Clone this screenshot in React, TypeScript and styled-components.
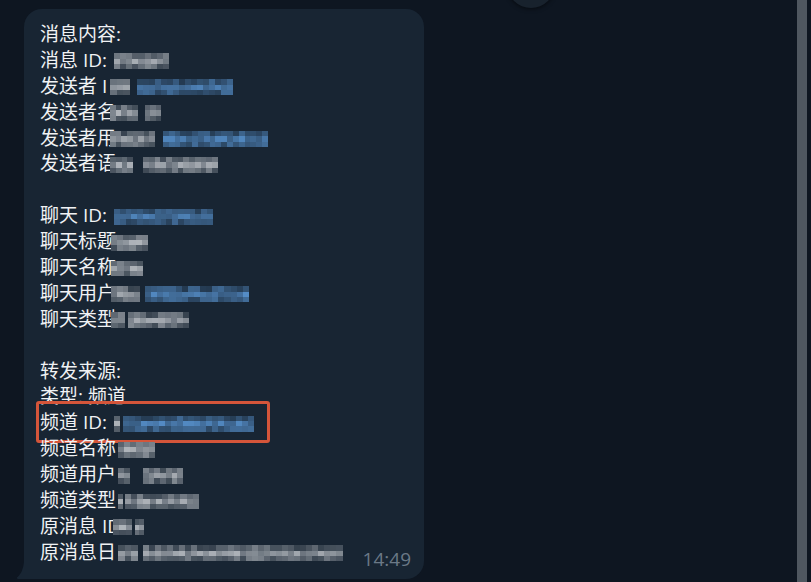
import React from "react";
import styled, { createGlobalStyle } from "styled-components";

const Global = createGlobalStyle`
  html, body { margin: 0; padding: 0; background: #0e1621; }
  body { width: 811px; height: 582px; overflow: hidden; }
`;

const Page = styled.div`
  width: 811px;
  height: 582px;
  display: flex;
  background: #0e1621;
  overflow: hidden;
  font-family: "Open Sans", "Noto Sans CJK SC", sans-serif;
`;

const Chat = styled.div`
  flex: 1;
  position: relative;
  padding: 9px 0 0 24px;
`;

const ScrollTrack = styled.div`
  width: 10px;
  margin-right: 4px;
  background: #4f5760;
`;

const JumpButton = styled.div`
  position: absolute;
  left: 507px;
  top: -40px;
  width: 48px;
  height: 48px;
  border-radius: 50%;
  background: #18222d;
  box-shadow: 0 1px 4px rgba(0, 0, 0, 0.55);
`;

const Bubble = styled.div`
  position: relative;
  width: 400px;
  box-sizing: border-box;
  padding: 13px 13px 13px 16px;
  background: #182533;
  border-radius: 18px 18px 18px 0;
  color: #f0f2f4;
  font-size: 19px;
`;

const Tail = styled.svg`
  position: absolute;
  left: -9px;
  bottom: 0;
  width: 9px;
  height: 17px;
  fill: #182533;
`;

const Line = styled.div`
  position: relative;
  display: grid;
  height: 25.9px;
  line-height: 25.9px;
  white-space: pre;
`;

const Label = styled.span`
  grid-area: 1 / 1;
`;

const Redact = styled.span<{ $x: number }>`
  grid-area: 1 / 1;
  align-self: center;
  justify-self: start;
  margin-left: ${(p) => p.$x}px;
  margin-top: 1px;
  display: flex;
`;

const MosaicBlock = styled.span<{ $cols: number; $w: number }>`
  display: grid;
  grid-template-rows: repeat(3, 5.3px);
  grid-template-columns: repeat(${(p) => p.$cols}, ${(p) => p.$w / p.$cols}px);
  grid-auto-flow: column;
`;

const Gap = styled.span<{ $w: number }>`
  width: ${(p) => p.$w}px;
`;

const Cell = styled.span`
  display: block;
`;

const Highlight = styled.div`
  position: absolute;
  left: -4px;
  top: -9px;
  width: 234px;
  height: 42px;
  box-sizing: border-box;
  border: 3px solid #d4553a;
  border-radius: 3px;
  pointer-events: none;
`;

const Time = styled.span`
  grid-area: 1 / 1;
  justify-self: end;
  align-self: end;
  margin-bottom: -3px;
  font-family: "Open Sans", sans-serif;
  font-size: 19px;
  line-height: 1;
  color: #6b7987;
`;

type Seg = [number, "g" | "b" | "_"];
type Row = { label?: string; x?: number; segs?: Seg[]; mark?: boolean; time?: string };

const rows: Row[] = [
  { label: "消息内容:" },
  { label: "消息 ID:", x: 74, segs: [[55, "g"]] },
  { label: "发送者 I", x: 70, segs: [[20, "g"], [7, "_"], [96, "b"]] },
  { label: "发送者名", x: 70, segs: [[28, "g"], [7, "_"], [16, "g"]] },
  { label: "发送者用", x: 70, segs: [[45, "g"], [8, "_"], [105, "b"]] },
  { label: "发送者语", x: 70, segs: [[23, "g"], [10, "_"], [75, "g"]] },
  {},
  { label: "聊天 ID:", x: 74, segs: [[99, "b"]] },
  { label: "聊天标题", x: 71, segs: [[37, "g"]] },
  { label: "聊天名称", x: 71, segs: [[32, "g"]] },
  { label: "聊天用户", x: 71, segs: [[29, "g"], [5, "_"], [104, "b"]] },
  { label: "聊天类型", x: 71, segs: [[14, "g"], [3, "_"], [61, "g"]] },
  {},
  { label: "转发来源:" },
  { label: "类型: 频道" },
  { label: "频道 ID:", x: 74, segs: [[6, "g"], [3, "_"], [131, "b"]], mark: true },
  { label: "频道名称", x: 78, segs: [[37, "g"]] },
  { label: "频道用户", x: 78, segs: [[12, "g"], [13, "_"], [40, "g"]] },
  { label: "频道类型", x: 78, segs: [[5, "g"], [2, "_"], [74, "g"]] },
  { label: "原消息 ID", x: 73, segs: [[19, "g"], [3, "_"], [9, "g"]] },
  { label: "原消息日", x: 78, segs: [[20, "g"], [5, "_"], [200, "g"]], time: "14:49" },
];

function rng(seed: number) {
  let a = seed >>> 0;
  return () => {
    a = (a + 0x6d2b79f5) >>> 0;
    let t = a;
    t = Math.imul(t ^ (t >>> 15), t | 1);
    t ^= t + Math.imul(t ^ (t >>> 7), t | 61);
    return ((t ^ (t >>> 14)) >>> 0) / 4294967296;
  };
}

const BG = [24, 37, 51];
const TONES = { g: [176, 181, 187], b: [84, 140, 198] };

function mix(tone: number[], k: number) {
  const c = tone.map((v, i) => Math.round(BG[i] + (v - BG[i]) * k));
  return `rgb(${c[0]},${c[1]},${c[2]})`;
}

function Mosaic({ segs, seed }: { segs: Seg[]; seed: number }) {
  const r = rng(seed * 977 + 13);
  return (
    <>
      {segs.map(([w, t], i) => {
        if (t === "_") return <Gap key={i} $w={w} />;
        const cols = Math.max(1, Math.round(w / 6));
        const cells: string[] = [];
        for (let c = 0; c < cols; c++) {
          cells.push(mix(TONES[t], 0.2 + r() * 0.45));
          cells.push(mix(TONES[t], 0.55 + r() * 0.45));
          cells.push(mix(TONES[t], 0.25 + r() * 0.45));
        }
        return (
          <MosaicBlock key={i} $cols={cols} $w={w}>
            {cells.map((bg, j) => (
              <Cell key={j} style={{ background: bg }} />
            ))}
          </MosaicBlock>
        );
      })}
    </>
  );
}

export default function App() {
  return (
    <Page>
      <Global />
      <Chat>
        <JumpButton />
        <Bubble>
          {rows.map((row, i) => (
            <Line key={i}>
              <Label>{row.label ?? " "}</Label>
              {row.segs && (
                <Redact $x={row.x ?? 0}>
                  <Mosaic segs={row.segs} seed={i + 1} />
                </Redact>
              )}
              {row.time && <Time>{row.time}</Time>}
              {row.mark && <Highlight />}
            </Line>
          ))}
          <Tail viewBox="0 0 9 17">
            <path d="M3 17h6V0c-.193 2.84-.876 5.767-2.05 8.782-.904 2.325-2.446 4.485-4.625 6.48A1 1 0 0 0 3 17z" />
          </Tail>
        </Bubble>
      </Chat>
      <ScrollTrack />
    </Page>
  );
}
